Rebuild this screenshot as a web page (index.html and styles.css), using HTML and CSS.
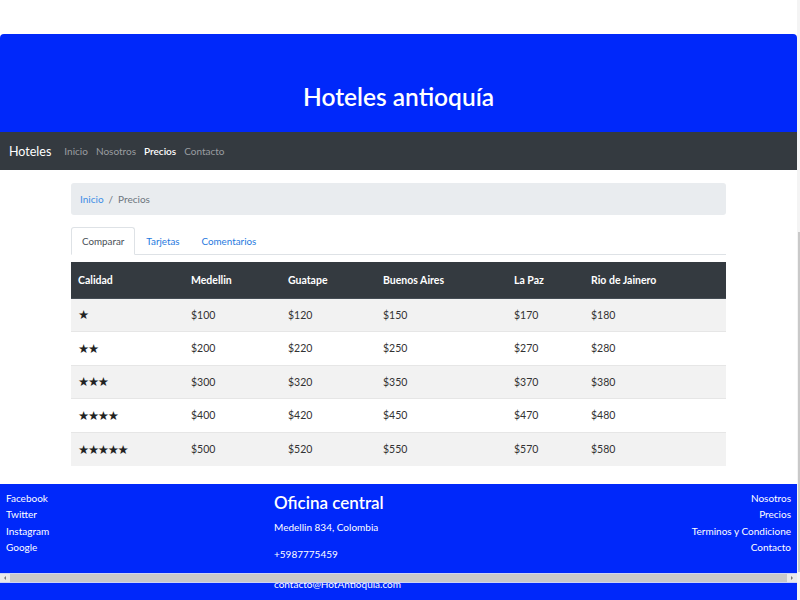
FILE: index.html
```html
<!DOCTYPE html>
<html lang="es">
<head>
<meta charset="utf-8">
<title>Hoteles antioquía</title>
<link rel="stylesheet" href="styles.css">
</head>
<body>
<div class="page">
  <div class="main">
    <div class="top-space"></div>
    <header class="jumbo"><h1>Hoteles antioquía</h1></header>
    <nav class="navbar">
      <span class="brand">Hoteles</span>
      <a class="nav-link">Inicio</a>
      <a class="nav-link">Nosotros</a>
      <a class="nav-link active">Precios</a>
      <a class="nav-link">Contacto</a>
    </nav>
    <div class="container">
      <div class="breadcrumb"><a class="bc-link">Inicio</a><span class="bc-sep">/</span><span class="bc-cur">Precios</span></div>
      <div class="tabs">
        <a class="tab active">Comparar</a>
        <a class="tab">Tarjetas</a>
        <a class="tab">Comentarios</a>
      </div>
      <table class="prices">
        <thead>
          <tr><th class="c1">Calidad</th><th class="c2">Medellin</th><th class="c3">Guatape</th><th class="c4">Buenos Aires</th><th class="c5">La Paz</th><th>Rio de Jainero</th></tr>
        </thead>
        <tbody>
          <tr><td class="stars">★</td><td>$100</td><td>$120</td><td>$150</td><td>$170</td><td>$180</td></tr>
          <tr><td class="stars">★★</td><td>$200</td><td>$220</td><td>$250</td><td>$270</td><td>$280</td></tr>
          <tr><td class="stars">★★★</td><td>$300</td><td>$320</td><td>$350</td><td>$370</td><td>$380</td></tr>
          <tr><td class="stars">★★★★</td><td>$400</td><td>$420</td><td>$450</td><td>$470</td><td>$480</td></tr>
          <tr><td class="stars">★★★★★</td><td>$500</td><td>$520</td><td>$550</td><td>$570</td><td>$580</td></tr>
        </tbody>
      </table>
    </div>
    <footer class="footer">
      <ul class="f-col f-left">
        <li>Facebook</li><li>Twitter</li><li>Instagram</li><li>Google</li>
      </ul>
      <div class="f-center">
        <h2>Oficina central</h2>
        <p>Medellin 834, Colombia</p>
        <p>+5987775459</p>
        <p class="email">contacto@HotAntioquia.com</p>
      </div>
      <ul class="f-col f-right">
        <li>Nosotros</li><li>Precios</li><li>Terminos y Condicione</li><li>Contacto</li>
      </ul>
      <div class="hscroll"><span class="arrow left"></span><span class="track"></span><span class="arrow right"></span></div>
    </footer>
  </div>
  <div class="vscroll"><div class="thumb"></div></div>
</div>
</body>
</html>
```

FILE: styles.css
```css
* { box-sizing: border-box; }
html, body { margin: 0; padding: 0; }
body {
  font-family: Lato, "Open Sans", sans-serif;
  color: #212529;
  background: #fff;
  width: 800px;
  height: 600px;
  overflow: hidden;
}
.page { display: flex; height: 600px; }
.main { width: 797px; display: flex; flex-direction: column; }
.vscroll { width: 3px; background: #f4f4f4; display: flex; flex-direction: column; }
.vscroll .thumb { margin-top: 232px; height: 340px; background: #c9c9c9; width: 2px; margin-left: 1px; }

.top-space { height: 34px; }
.jumbo {
  height: 98px;
  background: #0028fa;
  border-radius: 4px 4px 0 0;
  display: flex;
  align-items: center;
  justify-content: center;
  padding-top: 26px;
}
.jumbo h1 {
  margin: 0;
  color: #fff;
  font-size: 24.5px;
  font-weight: 600;
  letter-spacing: 0;
}
.navbar {
  height: 38px;
  background: #343a40;
  display: flex;
  align-items: center;
  padding-left: 9px;
}
.brand { color: #fff; font-size: 12.5px; margin-right: 13px; }
.nav-link { color: #9a9da0; font-size: 10px; margin-right: 8px; }
.nav-link.active { color: #fff; font-weight: 600; }

.container { margin: 0 71px; padding-top: 13px; }
.breadcrumb {
  height: 32px;
  background: #e9ecef;
  border-radius: 3px;
  display: flex;
  align-items: center;
  padding-left: 9px;
  font-size: 10px;
}
.bc-link { color: #3e8ee6; }
.bc-sep { color: #6c757d; margin: 0 5px; }
.bc-cur { color: #6c757d; }

.tabs {
  margin-top: 12px;
  height: 28px;
  display: flex;
  border-bottom: 1px solid #dee2e6;
}
.tab {
  font-size: 9.8px;
  color: #1f7ae0;
  padding: 0 10px;
  display: flex;
  align-items: center;
  border: 1px solid transparent;
  border-radius: 3px 3px 0 0;
  margin-bottom: -1px;
}
.tab.active { color: #495057; border-color: #dee2e6 #dee2e6 #fff; background: #fff; }

.prices {
  margin-top: 7px;
  width: 100%;
  border-collapse: collapse;
  font-size: 10.5px;
}
.prices th {
  background: #343a40;
  color: #fff;
  text-align: left;
  font-weight: 700;
  height: 36px;
  padding: 0 7px;
  border-bottom: 1px solid #454d55;
}
.prices td {
  height: 33.5px;
  padding: 0 7px;
  border-top: 1px solid #e6e6e6;
  color: #333;
}
.prices tbody tr:nth-child(odd) td { background: #f2f2f2; }
.prices td.stars { font-family: "DejaVu Sans", sans-serif; font-size: 12.5px; color: #222; letter-spacing: -1.3px; }
.c1 { width: 113px; }
.c2 { width: 97px; }
.c3 { width: 95px; }
.c4 { width: 131px; }
.c5 { width: 77px; }

.footer {
  margin-top: 18px;
  flex: 1;
  background: #0028fa;
  color: #fff;
  display: flex;
  position: relative;
  overflow: hidden;
  font-size: 10px;
}
.f-col { list-style: none; margin: 0; padding: 0; }
.f-col li { height: 16.5px; line-height: 16.5px; }
.f-left { width: 274px; padding: 6px 0 0 6px; }
.f-center { flex: 1; padding-top: 7px; }
.f-center h2 { margin: 0 0 6px; font-size: 17px; font-weight: 600; line-height: 24px; }
.f-center p { margin: 0 0 14px; line-height: 13px; }
.f-center p.email { margin-top: 17px; }
.f-right { text-align: right; padding: 6px 6px 0 0; }

.hscroll {
  position: absolute;
  left: 0;
  right: 0;
  top: 89px;
  height: 10px;
  display: flex;
  background: #c8c8c8;
  border-top: 1px solid #cdd3f5;
  border-bottom: 1px solid #cdd3f5;
}
.hscroll .track { flex: 1; }
.hscroll .arrow { width: 10px; background: #e9e9e9; position: relative; }
.hscroll .arrow::after {
  content: "";
  position: absolute;
  top: 2px;
  border-top: 2px solid transparent;
  border-bottom: 2px solid transparent;
}
.hscroll .arrow.left::after { left: 4px; border-right: 2px solid #777; }
.hscroll .arrow.right::after { left: 4px; border-left: 2px solid #777; }
```
